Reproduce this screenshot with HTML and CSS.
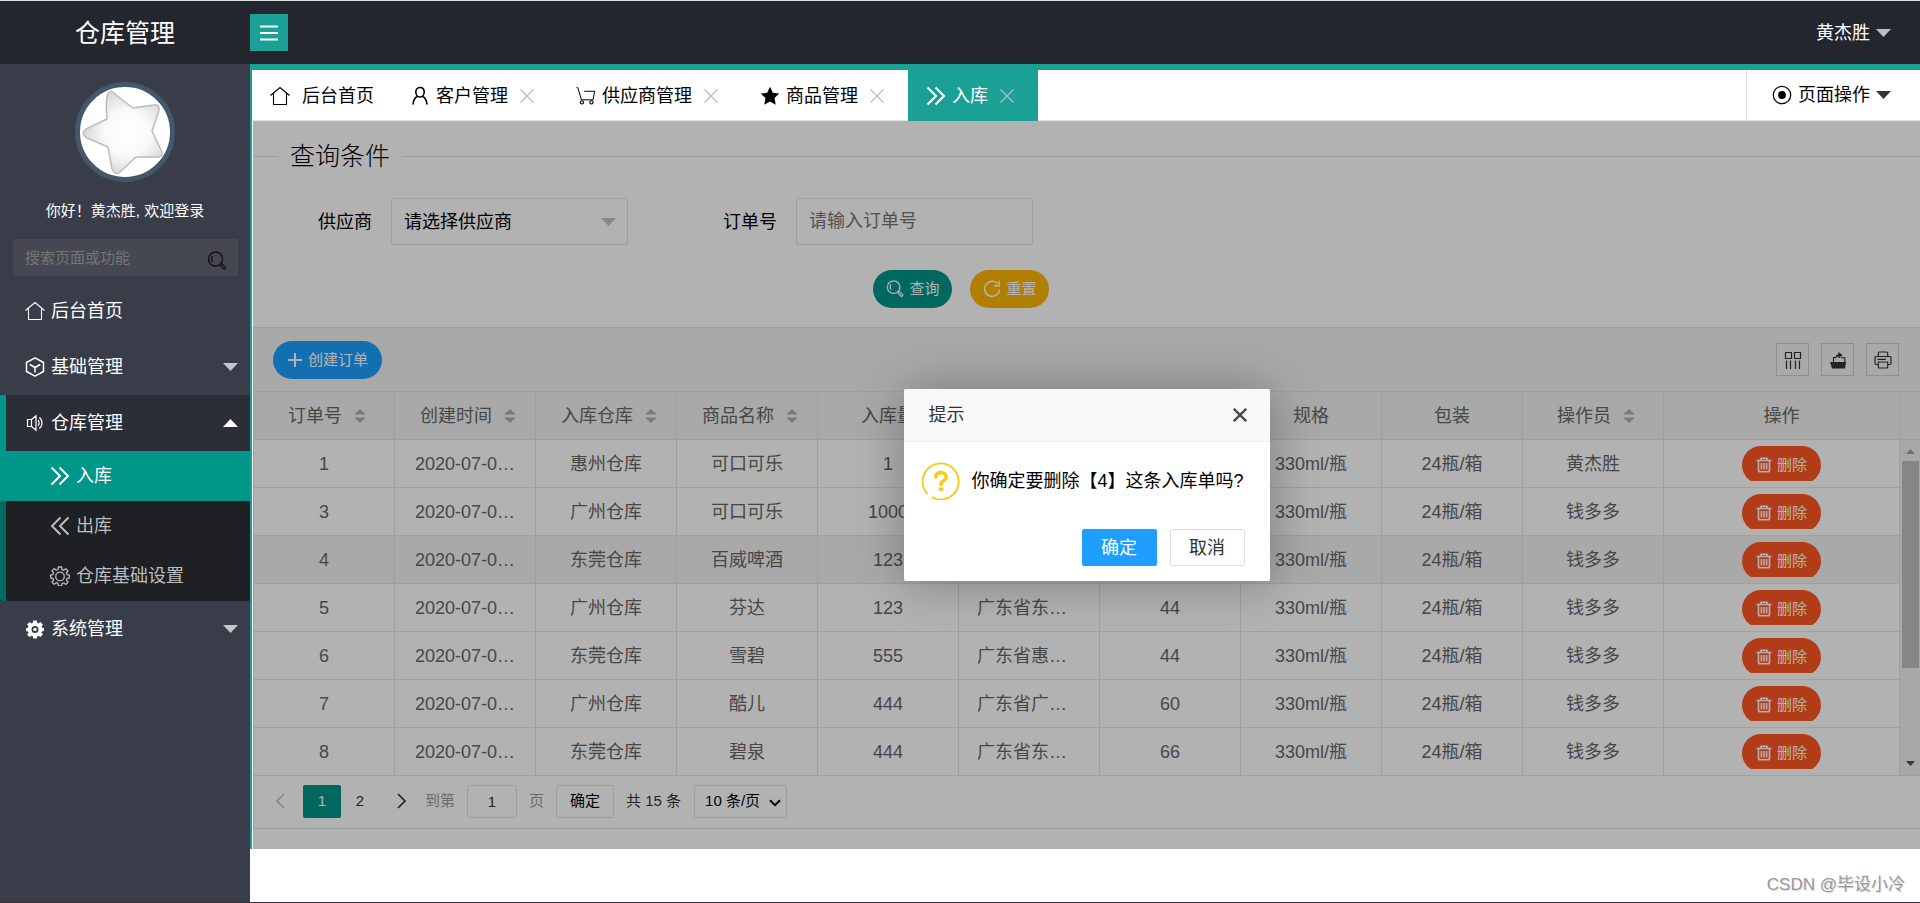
FILE: index.html
```html
<!DOCTYPE html>
<html lang="zh-CN">
<head>
<meta charset="utf-8">
<meta name="viewport" content="width=device-width, initial-scale=1">
<title>仓库管理</title>
<link rel="stylesheet" href="styles.css">
</head>
<body>
<svg class="sprite" aria-hidden="true">
  <symbol id="i-home" viewBox="0 0 20 20"><path d="M.5 9.500 10 1.500l9.500 8M3.500 7.500V18.500h13V7.500" fill="none" stroke="currentColor" stroke-width="1.100"/></symbol>
  <symbol id="i-user" viewBox="0 0 20 20"><path d="M10 1.500c2.600 0 4.200 1.900 4.200 4.500S12.500 11 10 11 5.800 8.600 5.800 6 7.400 1.500 10 1.500zM3 18.500c.3-4.200 2-7 4.800-8.200M17 18.500c-.3-4.200-2-7-4.800-8.200" fill="none" stroke="currentColor" stroke-width="1.600"/></symbol>
  <symbol id="i-cart" viewBox="0 0 22 20"><path d="M.5 .8h1.500l4 13.400h12.800L20.500 5M9 4.800h12" fill="none" stroke="currentColor" stroke-width="1.100"/><circle cx="6.500" cy="17" r="1.800" fill="none" stroke="currentColor" stroke-width="1.200"/><circle cx="17" cy="17" r="1.800" fill="none" stroke="currentColor" stroke-width="1.200"/></symbol>
  <symbol id="i-star" viewBox="0 0 20 20"><path d="M10 .8l2.800 6 6.400.8-4.700 4.500 1.200 6.600L10 15.500l-5.700 3.200 1.200-6.600L.8 7.600l6.400-.8z" fill="currentColor"/></symbol>
  <symbol id="i-next2" viewBox="0 0 20 20"><path d="M1.500 1.500L10 10l-8.500 8.500M9.500 1.500L18 10l-8.500 8.500" fill="none" stroke="currentColor" stroke-width="2"/></symbol>
  <symbol id="i-prev2" viewBox="0 0 20 20"><path d="M18.500 1.500L10 10l8.500 8.500M10.500 1.500L2 10l8.500 8.500" fill="none" stroke="currentColor" stroke-width="2"/></symbol>
  <symbol id="i-close" viewBox="0 0 14 14"><path d="M.5 .5l13 13M13.500 .5L.5 13.500" fill="none" stroke="currentColor" stroke-width="1.200"/></symbol>
  <symbol id="i-closebold" viewBox="0 0 14 14"><path d="M.8.8l12.400 12.400M13.200.8L.8 13.200" fill="none" stroke="currentColor" stroke-width="2.400"/></symbol>
  <symbol id="i-radio" viewBox="0 0 20 20"><circle cx="10" cy="10" r="8.700" fill="none" stroke="currentColor" stroke-width="1.200"/><circle cx="10" cy="10" r="3.900" fill="currentColor"/></symbol>
  <symbol id="i-down" viewBox="0 0 15 8"><path d="M0 0h15L7.500 8z" fill="currentColor"/></symbol>
  <symbol id="i-up" viewBox="0 0 15 8"><path d="M0 8h15L7.500 0z" fill="currentColor"/></symbol>
  <symbol id="i-menu" viewBox="0 0 18 16"><path d="M0 1.500h18M0 8h18M0 14.500h18" stroke="currentColor" stroke-width="2.200"/></symbol>
  <symbol id="i-search" viewBox="0 0 20 20"><circle cx="8.500" cy="8" r="7" fill="none" stroke="currentColor" stroke-width="1.400"/><path d="M5.600 4.800a5 5 0 0 0 0 6M12.800 13.800l1.600-1.400 4.400 4.400-1.600 1.600z" fill="none" stroke="currentColor" stroke-width="1.300"/></symbol>
  <symbol id="i-cube" viewBox="0 0 20 20"><path d="M10 .8l8.500 4.700v9L10 19.200l-8.500-4.700v-9zM4.800 7.500L10 10.500l5.200-3M10 10.500V15.500" fill="none" stroke="currentColor" stroke-width="1.500" stroke-linejoin="round"/></symbol>
  <symbol id="i-sound" viewBox="0 0 20 20"><path d="M2.500 6.500h4v7h-4zM6.500 6.500l4.500-3.700v14.400l-4.500-3.700M13 7.200c1.300 1.600 1.300 4 0 5.600M14.300 4.600c3.500 2.400 3.500 8.400 0 10.800" fill="none" stroke="currentColor" stroke-width="1.200"/></symbol>
  <symbol id="i-gear" viewBox="0 0 20 20"><path d="M8.400 1h3.200l.4 2.600 1.700.7 2.100-1.600 2.200 2.200-1.600 2.100.7 1.700 2.400.4v2.900l-2.400.4-.7 1.700 1.600 2.100-2.200 2.200-2.100-1.600-1.700.7-.4 2.400H8.400L8 17.400l-1.700-.7-2.100 1.600L2 16.100 3.600 14l-.7-1.700L.6 12V9l2.300-.4.7-1.700L2 4.800l2.200-2.200 2.100 1.600L8 3.500z" fill="none" stroke="currentColor" stroke-width="1.300" stroke-linejoin="round"/><circle cx="10" cy="10.400" r="4.300" fill="none" stroke="currentColor" stroke-width="1.300"/></symbol>
  <symbol id="i-gearfill" viewBox="0 0 20 20"><path fill-rule="evenodd" d="M8.200 1.500h3.600l.4 2.300 1.300.6 1.900-1.400 2.500 2.500-1.400 1.900.6 1.300 1.900.4v2.800l-1.900.4-.6 1.400 1.400 1.900-2.500 2.400-1.900-1.300-1.300.5-.4 2.200H8.200l-.4-2.200-1.300-.5L4.600 18.100 2.100 15.700l1.400-1.900-.6-1.400L1 12V9.200l1.900-.4.6-1.400-1.400-1.900L4.600 3l1.900 1.400 1.300-.6zM10 6.900a3.500 3.500 0 1 0 0 7 3.500 3.500 0 0 0 0-7z" fill="currentColor"/><circle cx="10" cy="10.400" r="1.700" fill="currentColor"/></symbol>
  <symbol id="i-refresh" viewBox="0 0 20 20"><path d="M16.500 4.500A8.300 8.300 0 1 0 18.300 11M18 .8v5.700h-5.700" fill="none" stroke="currentColor" stroke-width="1.700"/></symbol>
  <symbol id="i-plus" viewBox="0 0 16 16"><path d="M8 1v14M1 8h14" stroke="currentColor" stroke-width="2"/></symbol>
  <symbol id="i-trash" viewBox="0 0 16 16"><path d="M.5 3.500h15M5 3V1.300h6V3M2.500 4v9c0 1.100.6 1.800 1.600 1.800h7.800c1 0 1.600-.7 1.600-1.800V4M5.400 6v6.500M8 6v6.500M10.600 6v6.500" fill="none" stroke="currentColor" stroke-width="1.600"/></symbol>
  <symbol id="i-cols" viewBox="0 0 18 18"><path d="M1.500 1.500h6v6h-6zM10.500 1.500h6v6h-6zM2.500 9.500V18M6.500 9.500V18M11.500 9.500V18M15.500 9.500V18" fill="none" stroke="currentColor" stroke-width="1.200"/></symbol>
  <symbol id="i-export" viewBox="0 0 18 18"><path d="M1 11h16l-1 6.500H3z" fill="currentColor"/><path d="M4.500 11V6.500H7M12 6.800h3.800V11" fill="none" stroke="currentColor" stroke-width="1.100"/><path d="M6 8.500c0-3 1.200-5 3.500-5.300V.8L13.500 4.200 9.500 7.400V5.500C7.800 5.700 6.800 6.700 6 8.500z" fill="currentColor"/></symbol>
  <symbol id="i-print" viewBox="0 0 18 18"><path d="M4.300 5.500V2c0-.6.300-1 1-1h7.400c.7 0 1 .4 1 1v3.500M4 13.500H2.200c-.8 0-1.200-.5-1.200-1.200V6.700c0-.8.500-1.200 1.200-1.200h13.600c.7 0 1.200.5 1.200 1.200v5.600c0 .7-.4 1.200-1.200 1.200H14M4.300 11h9.400v5c0 .7-.4 1-1 1H5.300c-.6 0-1-.3-1-1zM3.500 8.300H12" fill="none" stroke="currentColor" stroke-width="1.200"/></symbol>
  <symbol id="i-left" viewBox="0 0 10 16"><path d="M9 1L2 8l7 7" fill="none" stroke="currentColor" stroke-width="1.700"/></symbol>
  <symbol id="i-right" viewBox="0 0 10 16"><path d="M1 1l7 7-7 7" fill="none" stroke="currentColor" stroke-width="1.700"/></symbol>
  <symbol id="i-chevron" viewBox="0 0 12 8"><path d="M1 1.200l5 5 5-5" fill="none" stroke="currentColor" stroke-width="2"/></symbol>
  <symbol id="i-sort" viewBox="0 0 12 14"><path d="M0 5.500L6 0l6 5.500zM0 8.500h12L6 14z" fill="currentColor"/></symbol>
  <symbol id="i-question" viewBox="0 0 38 38"><path d="M5.500 31.800A18 18 0 1 1 9.500 35" fill="none" stroke="#fbcb10" stroke-width="1.900"/><path d="M13.800 15c0-6.200 10.400-6 10.400 0 0 3.600-5.200 3.500-5.200 7.500" fill="none" stroke="#fbcb10" stroke-width="3.600" stroke-linecap="round"/><circle cx="19" cy="27.200" r="2.300" fill="#fbcb10"/></symbol>
</svg>

<header class="topbar">
  <h1 class="logo">仓库管理</h1>
  <button class="fold" type="button" aria-label="折叠菜单"><svg class="menu-icon"><use href="#i-menu"/></svg></button>
  <button class="account" type="button">黄杰胜<svg class="caret caret-soft"><use href="#i-down"/></svg></button>
</header>

<div class="shell">
  <aside class="sidebar">
    <div class="avatar">
      <svg viewBox="80 87 90 90" role="img" aria-label="头像">
        <defs><radialGradient id="starfill" gradientUnits="userSpaceOnUse" cx="127" cy="133" r="46"><stop offset="0" stop-color="#fff"/><stop offset=".5" stop-color="#f9f9f9"/><stop offset="1" stop-color="#d2d2d2"/></radialGradient></defs>
        <path d="M107 119Q105 100 108 93Q111 89 116 95L133 108L154 105Q160 104 159 111L152 131L162 152Q163 158 156 157L136 157L120 172Q115 176 112 169L108 147L87 138Q80 134 86 129Z" fill="url(#starfill)" stroke="#bcbcbc" stroke-width="1.500" stroke-linejoin="round"/>
      </svg>
    </div>
    <p class="greeting">你好！黄杰胜, 欢迎登录</p>
    <form class="side-search">
      <input type="text" placeholder="搜索页面或功能" aria-label="搜索页面或功能">
      <button type="button" aria-label="搜索"><svg class="icon"><use href="#i-search"/></svg></button>
    </form>
    <nav>
      <ul class="menu">
        <li><a class="menu-link" href="#"><svg class="icon"><use href="#i-home"/></svg>后台首页</a></li>
        <li><a class="menu-link" href="#"><svg class="icon"><use href="#i-cube"/></svg>基础管理<svg class="caret caret-soft"><use href="#i-down"/></svg></a></li>
        <li><a class="menu-link open" href="#"><svg class="icon"><use href="#i-sound"/></svg>仓库管理<svg class="caret"><use href="#i-up"/></svg></a>
          <ul class="submenu">
            <li><a class="sub-link active" href="#"><svg class="icon"><use href="#i-next2"/></svg>入库</a></li>
            <li><a class="sub-link" href="#"><svg class="icon"><use href="#i-prev2"/></svg>出库</a></li>
            <li><a class="sub-link" href="#"><svg class="icon"><use href="#i-gear"/></svg>仓库基础设置</a></li>
          </ul>
        </li>
        <li><a class="menu-link" href="#"><svg class="icon"><use href="#i-gearfill"/></svg>系统管理<svg class="caret caret-soft"><use href="#i-down"/></svg></a></li>
      </ul>
    </nav>
  </aside>

  <main class="content">
    <div class="workspace">
      <div class="tabbar">
        <div class="tab tab-home"><a href="#"><svg class="icon"><use href="#i-home"/></svg>后台首页</a></div>
        <div class="tab"><a href="#"><svg class="icon"><use href="#i-user"/></svg>客户管理</a><button type="button" aria-label="关闭客户管理"><svg><use href="#i-close"/></svg></button></div>
        <div class="tab"><a href="#"><svg class="icon"><use href="#i-cart"/></svg>供应商管理</a><button type="button" aria-label="关闭供应商管理"><svg><use href="#i-close"/></svg></button></div>
        <div class="tab"><a href="#"><svg class="icon"><use href="#i-star"/></svg>商品管理</a><button type="button" aria-label="关闭商品管理"><svg><use href="#i-close"/></svg></button></div>
        <div class="tab tab-active"><a href="#"><svg class="icon"><use href="#i-next2"/></svg>入库</a><button type="button" aria-label="关闭入库"><svg><use href="#i-close"/></svg></button></div>
        <button class="page-ops" type="button"><svg class="icon"><use href="#i-radio"/></svg>页面操作<svg class="caret"><use href="#i-down"/></svg></button>
      </div>

      <div class="frame">
        <form class="query">
          <fieldset>
            <legend>查询条件</legend>
            <div class="fields">
              <div class="field">
                <label for="supplier">供应商</label>
                <div class="select-box">
                  <select id="supplier"><option>请选择供应商</option></select>
                  <svg class="caret"><use href="#i-down"/></svg>
                </div>
              </div>
              <div class="field">
                <label for="order">订单号</label>
                <input id="order" type="text" placeholder="请输入订单号">
              </div>
            </div>
            <div class="query-actions">
              <button class="btn btn-green" type="button"><svg class="icon"><use href="#i-search"/></svg>查询</button>
              <button class="btn btn-yellow" type="button"><svg class="icon"><use href="#i-refresh"/></svg>重置</button>
            </div>
          </fieldset>
        </form>

        <section class="grid">
          <div class="toolbar">
            <button class="btn btn-blue" type="button"><svg class="icon"><use href="#i-plus"/></svg>创建订单</button>
            <div class="tools">
              <button type="button" aria-label="筛选列"><svg><use href="#i-cols"/></svg></button>
              <button type="button" aria-label="导出"><svg><use href="#i-export"/></svg></button>
              <button type="button" aria-label="打印"><svg><use href="#i-print"/></svg></button>
            </div>
          </div>
          <div class="grid-main">
            <table>
              <colgroup><col class="c" span="10"><col></colgroup>
              <thead>
                <tr>
                  <th scope="col">订单号<svg class="sort"><use href="#i-sort"/></svg></th>
                  <th scope="col">创建时间<svg class="sort"><use href="#i-sort"/></svg></th>
                  <th scope="col">入库仓库<svg class="sort"><use href="#i-sort"/></svg></th>
                  <th scope="col">商品名称<svg class="sort"><use href="#i-sort"/></svg></th>
                  <th scope="col">入库量</th><td></td><td></td>
                  <th scope="col">规格</th><th scope="col">包装</th>
                  <th scope="col">操作员<svg class="sort"><use href="#i-sort"/></svg></th>
                  <th scope="col">操作</th>
                </tr>
              </thead>
              <tbody>
                <tr><td>1</td><td>2020-07-0…</td><td>惠州仓库</td><td>可口可乐</td><td>1</td><td></td><td></td><td>330ml/瓶</td><td>24瓶/箱</td><td>黄杰胜</td><td><div class="cell"><button class="btn btn-red" type="button"><svg class="icon"><use href="#i-trash"/></svg>删除</button></div></td></tr>
                <tr><td>3</td><td>2020-07-0…</td><td>广州仓库</td><td>可口可乐</td><td>1000</td><td></td><td></td><td>330ml/瓶</td><td>24瓶/箱</td><td>钱多多</td><td><div class="cell"><button class="btn btn-red" type="button"><svg class="icon"><use href="#i-trash"/></svg>删除</button></div></td></tr>
                <tr class="hovered"><td>4</td><td>2020-07-0…</td><td>东莞仓库</td><td>百威啤酒</td><td>123</td><td></td><td></td><td>330ml/瓶</td><td>24瓶/箱</td><td>钱多多</td><td><div class="cell"><button class="btn btn-red" type="button"><svg class="icon"><use href="#i-trash"/></svg>删除</button></div></td></tr>
                <tr><td>5</td><td>2020-07-0…</td><td>广州仓库</td><td>芬达</td><td>123</td><td class="address">广东省东…</td><td>44</td><td>330ml/瓶</td><td>24瓶/箱</td><td>钱多多</td><td><div class="cell"><button class="btn btn-red" type="button"><svg class="icon"><use href="#i-trash"/></svg>删除</button></div></td></tr>
                <tr><td>6</td><td>2020-07-0…</td><td>东莞仓库</td><td>雪碧</td><td>555</td><td class="address">广东省惠…</td><td>44</td><td>330ml/瓶</td><td>24瓶/箱</td><td>钱多多</td><td><div class="cell"><button class="btn btn-red" type="button"><svg class="icon"><use href="#i-trash"/></svg>删除</button></div></td></tr>
                <tr><td>7</td><td>2020-07-0…</td><td>广州仓库</td><td>酷儿</td><td>444</td><td class="address">广东省广…</td><td>60</td><td>330ml/瓶</td><td>24瓶/箱</td><td>钱多多</td><td><div class="cell"><button class="btn btn-red" type="button"><svg class="icon"><use href="#i-trash"/></svg>删除</button></div></td></tr>
                <tr><td>8</td><td>2020-07-0…</td><td>东莞仓库</td><td>碧泉</td><td>444</td><td class="address">广东省东…</td><td>66</td><td>330ml/瓶</td><td>24瓶/箱</td><td>钱多多</td><td><div class="cell"><button class="btn btn-red" type="button"><svg class="icon"><use href="#i-trash"/></svg>删除</button></div></td></tr>
              </tbody>
            </table>
            <div class="gutter" aria-hidden="true">
              <div class="gutter-head"></div>
              <div class="scroll">
                <svg class="scroll-arrow scroll-up"><use href="#i-up"/></svg>
                <div class="scroll-track"><div class="scroll-thumb"></div></div>
                <svg class="scroll-arrow"><use href="#i-down"/></svg>
              </div>
            </div>
          </div>
          <div class="pager">
            <button class="pg pg-off" type="button" aria-label="上一页"><svg><use href="#i-left"/></svg></button>
            <a class="pg pg-now" href="#">1</a>
            <a class="pg" href="#">2</a>
            <button class="pg pg-next" type="button" aria-label="下一页"><svg><use href="#i-right"/></svg></button>
            <label class="muted" for="goto">到第</label>
            <input class="goto" id="goto" type="text" value="1">
            <span class="muted">页</span>
            <button class="confirm" type="button">确定</button>
            <span>共 15 条</span>
            <div class="size-box"><select aria-label="每页条数"><option>10 条/页</option></select><svg><use href="#i-chevron"/></svg></div>
          </div>
        </section>

        <div class="shade">
          <div class="dialog" role="dialog" aria-labelledby="dlg-title">
            <div class="dialog-head"><h2 id="dlg-title">提示</h2><button type="button" aria-label="关闭"><svg><use href="#i-closebold"/></svg></button></div>
            <div class="dialog-body"><svg><use href="#i-question"/></svg><p>你确定要删除【4】这条入库单吗?</p></div>
            <div class="dialog-foot"><button class="ok" type="button">确定</button><button type="button">取消</button></div>
          </div>
        </div>
      </div>
    </div>
    <p class="watermark">CSDN @毕设小冷</p>
  </main>
</div>
</body>
</html>
```

FILE: styles.css
```css
*, *::before, *::after { box-sizing: border-box; }

body {
  margin: 0;
  min-height: 100vh;
  display: flex;
  flex-direction: column;
  border-top: 1px solid #d9dee2;
  border-bottom: 1px solid #3b2f39;
  background: #fff;
  color: #000;
  font: 18px/24px "Liberation Sans", "Noto Sans CJK SC", sans-serif;
}

h1, h2, p, ul { margin: 0; padding: 0; font-weight: 400; }
ul { list-style: none; }
a { color: inherit; text-decoration: none; }
button, input, select { font: inherit; color: inherit; margin: 0; }
button { padding: 0; border: 0; background: none; cursor: pointer; }
svg { display: block; flex: none; }
.sprite { position: absolute; width: 0; height: 0; }
.icon { width: 20px; height: 20px; }
.caret { width: 15px; height: 8px; }
.caret-soft { opacity: .7; }

/* top bar */
.topbar { display: flex; align-items: center; height: 63px; background: #23262e; color: #fff; }
.logo { width: 250px; text-align: center; font-size: 25px; line-height: 32px; }
.fold { display: flex; align-items: center; justify-content: center; width: 38px; height: 37px; background: #1aa094; }
.menu-icon { width: 18px; height: 16px; }
.account { display: flex; align-items: center; gap: 6px; margin-left: auto; padding-right: 29px; }

.shell { flex: 1; display: flex; }

/* sidebar */
.sidebar { width: 250px; flex: none; padding-top: 18px; background: #393d49; color: #fff; }
.avatar { width: 100px; height: 100px; margin: 0 auto; border: 5px solid #44576b; border-radius: 50%; background: #fff; overflow: hidden; }
.greeting { margin-top: 17px; text-align: center; font-size: 15px; }
.side-search { display: flex; align-items: center; height: 37px; margin: 16px 12px 7px 13px; padding: 0 11px 0 12px; border-radius: 2px; background: #454853; }
.side-search input { flex: 1; min-width: 0; padding: 0; border: 0; background: none; font-size: 15px; outline: 0; }
.side-search input::placeholder { color: #757575; }
.side-search button { margin-top: 6px; color: #111; }

.menu-link { display: flex; align-items: center; gap: 6px; height: 56px; padding: 0 12px 0 25px; }
.menu-link .caret { margin-left: auto; }
.menu-link.open { background: #2b2e38; box-shadow: inset 6px 0 #009688; }
.submenu { background: #1f2024; box-shadow: inset 6px 0 #006b61; border-radius: 2px; }
.sub-link { display: flex; align-items: center; gap: 6px; height: 50px; padding-left: 50px; color: #bcbdbf; }
.sub-link.active { background: #009688; color: #fff; }

/* tabs */
.content { flex: 1; min-width: 0; display: flex; flex-direction: column; justify-content: space-between; }
.workspace { border-top: 6px solid #1aa094; border-left: 2px solid #1aa094; }
.tabbar { display: flex; height: 51px; border-bottom: 1px solid #e2e2e2; }
.tab { display: flex; align-items: center; gap: 12px; margin-bottom: -1px; padding: 0 24px 0 18px; }
.tab a { display: flex; align-items: center; gap: 6px; }
.tab-home { padding-right: 18px; }
.tab-home a { gap: 12px; }
.tab button { color: #bbb; }
.tab button svg { width: 14px; height: 14px; }
.tab-active { position: relative; z-index: 1; background: #1aa094; color: #fff; }
.page-ops { display: flex; align-items: center; gap: 6px; margin-left: auto; padding: 0 29px 0 25px; border-left: 1px solid #e2e2e2; }
.page-ops .caret { color: #333; }

/* framed page */
.frame { position: relative; margin-left: 1px; padding: 16px 0 20px; }
fieldset { margin: 0; padding: 0; border: 0; border-top: 1px solid #e6e6e6; }
legend { margin-left: 25px; padding: 0 12px; font-size: 25px; line-height: 38px; font-weight: 300; }
.fields { display: flex; gap: 30px; padding-top: 23px; }
.field { display: flex; align-items: center; gap: 19px; }
.field label { width: 119px; text-align: right; }
.field input, .select-box { width: 237px; height: 47px; border: 1px solid #e6e6e6; border-radius: 2px; background: #fff; }
.field input { padding: 0 12px; }
.field input::placeholder { color: #757575; }
.select-box { position: relative; }
.select-box select { width: 100%; height: 100%; padding: 0 12px; border: 0; background: none; appearance: none; }
.select-box .caret { position: absolute; right: 11px; top: 19px; color: #c2c2c2; pointer-events: none; }
.query-actions { display: flex; justify-content: center; gap: 18px; width: 85%; padding: 25px 0 19px; }

.btn { display: inline-flex; align-items: center; gap: 5px; height: 38px; padding: 0 13px; border-radius: 19px; color: #fff; font-size: 15px; line-height: 20px; }
.btn .icon { width: 18px; height: 18px; }
.btn-green { background: #009688; }
.btn-yellow { background: #ffb800; }
.btn-blue { background: #1e9fff; padding: 0 14px; }
.btn-red { background: #ff5722; padding: 0 14px; }
.btn-blue .icon, .btn-red .icon { width: 16px; height: 16px; }

/* data grid */
.grid { border: 1px solid #e6e6e6; border-right: 0; color: #666; }
.toolbar { display: flex; align-items: center; justify-content: space-between; height: 63px; padding: 0 21px 0 19px; background: #f2f2f2; }
.tools { display: flex; gap: 12px; }
.tools button { display: flex; align-items: center; justify-content: center; width: 33px; height: 33px; border: 1px solid #ccc; color: #333; }
.tools svg { width: 18px; height: 18px; }
.grid-main { display: flex; border-top: 1px solid #e6e6e6; border-bottom: 1px solid #e6e6e6; }
table { flex: 1; width: 0; table-layout: fixed; border-collapse: separate; border-spacing: 0; }
.c { width: 141px; }
th, td { height: 48px; padding: 0; border-right: 1px solid #e6e6e6; border-bottom: 1px solid #e6e6e6; font-weight: 400; text-align: center; white-space: nowrap; }
tbody tr:last-child td { height: 47px; border-bottom: 0; }
thead, .hovered { background: #f2f2f2; }
.address { padding-left: 18px; text-align: left; }
.sort { display: inline-block; width: 12px; height: 14px; margin: 0 -6px 0 12px; color: #b2b2b2; vertical-align: -1px; }
.cell { display: flex; justify-content: center; align-items: flex-start; height: 35px; overflow: hidden; }
.gutter { width: 20px; display: flex; flex-direction: column; }
.gutter-head { height: 48px; background: #f2f2f2; border-bottom: 1px solid #e6e6e6; }
.scroll { flex: 1; display: flex; flex-direction: column; align-items: center; padding: 9px 0; background: #f1f1f1; }
.scroll-arrow { width: 9px; height: 5px; color: #505050; }
.scroll-up { color: #a3a3a3; }
.scroll-track { flex: 1; width: 17px; padding-top: 7px; }
.scroll-thumb { height: 69%; background: #c1c1c1; }

/* pager */
.pager { display: flex; align-items: center; height: 52px; padding: 0 0 2px 11px; font-size: 15px; color: #333; }
.pg { display: flex; align-items: center; justify-content: center; width: 38px; height: 33px; border-radius: 2px; }
.pg svg { width: 10px; height: 16px; }
.pg-off { justify-content: flex-start; padding-left: 10px; color: #c2c2c2; }
.pg-now { background: #009688; color: #fff; }
.pg-next { width: 46px; }
.pager .muted { color: #999; }
.pager .goto { width: 50px; height: 33px; margin: 0 12px; padding: 0; border: 1px solid #e2e2e2; border-radius: 2px; background: #fff; text-align: center; }
.confirm { width: 58px; height: 33px; margin: 0 12px; border: 1px solid #e2e2e2; border-radius: 2px; color: #000; }
.size-box { position: relative; width: 93px; height: 33px; margin-left: 13px; border: 1px solid #e2e2e2; border-radius: 2px; color: #000; }
.size-box select { width: 100%; height: 100%; padding: 0 10px; border: 0; background: none; appearance: none; }
.size-box svg { position: absolute; right: 5px; top: 13px; width: 12px; height: 8px; pointer-events: none; }

/* confirm dialog */
.shade { position: absolute; inset: 0; display: flex; align-items: center; justify-content: center; background: rgba(0, 0, 0, .3); overflow: hidden; }
.dialog { width: 366px; border-radius: 2px; background: #fff; box-shadow: 1px 1px 50px rgba(0, 0, 0, .3); }
.dialog-head { display: flex; align-items: center; justify-content: space-between; height: 53px; padding: 0 23px 0 25px; border-bottom: 1px solid #eee; background: #f8f8f8; color: #333; border-radius: 2px 2px 0 0; }
.dialog-head h2 { font-size: 18px; }
.dialog-head button { color: #4a4a55; }
.dialog-head svg { width: 14px; height: 14px; }
.dialog-body { display: flex; align-items: center; gap: 12px; padding: 20px 0 29px 18px; white-space: nowrap; }
.dialog-body svg { width: 38px; height: 38px; }
.dialog-foot { display: flex; justify-content: flex-end; gap: 13px; padding: 0 25px 15px; }
.dialog-foot button { width: 75px; height: 37px; border: 1px solid #dedede; border-radius: 2px; color: #333; }
.dialog-foot .ok { border-color: #1e9fff; background: #1e9fff; color: #fff; }

.watermark { padding: 0 15px 5px; text-align: right; font-size: 17px; color: #999; text-shadow: 1px 1px #ddd; }
```
